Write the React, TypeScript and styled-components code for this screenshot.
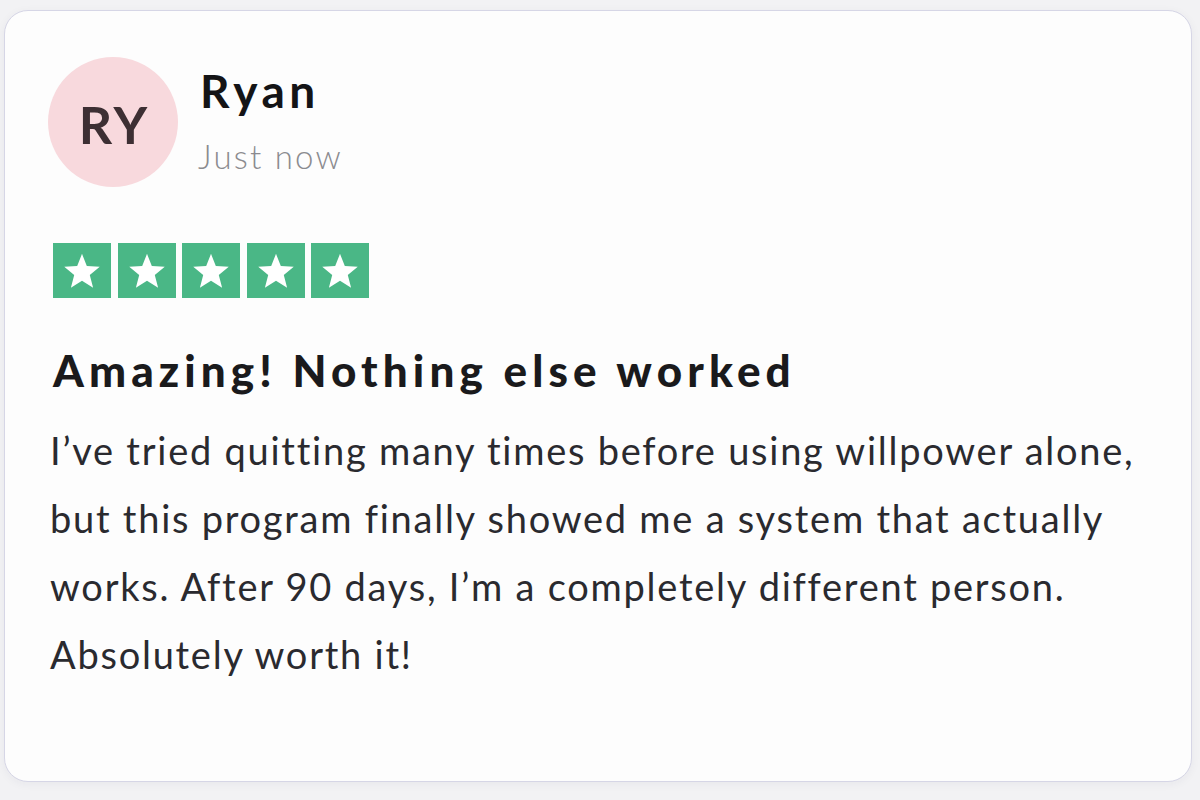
import React from "react";
import styled, { createGlobalStyle } from "styled-components";

const Global = createGlobalStyle`
  html, body { margin: 0; padding: 0; background: #f2f2f4; }
  body {
    font-family: Lato, "Open Sans", sans-serif;
    font-variant-ligatures: none;
    font-feature-settings: "liga" 0, "clig" 0;
  }
`;

const Page = styled.div`
  padding: 10px 8px 18px 4px;
`;

const Card = styled.div`
  box-sizing: border-box;
  width: 1188px;
  height: 772px;
  background: #fdfdfd;
  border: 1.5px solid #d6d6e6;
  border-radius: 24px;
  box-shadow: 0 2px 10px rgba(40, 40, 80, 0.05);
  padding: 46px 48px 0 48px;
  display: flex;
  flex-direction: column;
`;

const Header = styled.div`
  display: flex;
  align-items: flex-start;
  gap: 22px;
  margin-left: -5px;
`;

const Avatar = styled.div`
  width: 130px;
  height: 130px;
  border-radius: 50%;
  background: #f8d9dd;
  color: #3d2f33;
  font-weight: 700;
  font-size: 52px;
  letter-spacing: 3px;
  padding-top: 3px;
  padding-left: 3px;
  box-sizing: border-box;
  display: flex;
  align-items: center;
  justify-content: center;
  flex-shrink: 0;
`;

const Meta = styled.div`
  display: flex;
  flex-direction: column;
  padding-top: 7px;
`;

const Name = styled.div`
  font-size: 46px;
  font-weight: 700;
  color: #141416;
  line-height: 54px;
  letter-spacing: 4.5px;
`;

const Time = styled.div`
  font-size: 33px;
  font-weight: 300;
  color: #8b8b8f;
  line-height: 40px;
  margin-top: 18px;
  margin-left: -2px;
  letter-spacing: 2.2px;
`;

const Stars = styled.div`
  display: flex;
  gap: 6.5px;
  margin-top: 56px;
`;

const StarBox = styled.div`
  width: 58px;
  height: 55px;
  background: #4ab786;
  display: flex;
  align-items: center;
  justify-content: center;
`;

const Title = styled.h2`
  margin: 46px 0 0 0;
  font-size: 44px;
  font-weight: 900;
  color: #1a1a1c;
  line-height: 52px;
  letter-spacing: 5.1px;
`;

const Body = styled.p`
  margin: 20px -30px 0 -3px;
  font-size: 38px;
  font-weight: 400;
  color: #2a2a2f;
  line-height: 68px;
  letter-spacing: 1.75px;
`;

const Star = () => (
  <svg width="42" height="42" viewBox="0 0 24 24">
    <path
      d="M12 2.2l2.75 6.9 7.4.45-5.7 4.75 1.9 7.2L12 17.55l-6.35 3.95 1.9-7.2-5.7-4.75 7.4-.45z"
      fill="#ffffff"
    />
  </svg>
);

export default function App() {
  return (
    <>
      <Global />
      <Page>
        <Card>
          <Header>
            <Avatar>RY</Avatar>
            <Meta>
              <Name>Ryan</Name>
              <Time>Just now</Time>
            </Meta>
          </Header>
          <Stars>
            {[0, 1, 2, 3, 4].map((i) => (
              <StarBox key={i}>
                <Star />
              </StarBox>
            ))}
          </Stars>
          <Title>Amazing! Nothing else worked</Title>
          <Body>
            I’ve tried quitting many times before using willpower alone, but this program finally showed me a system that actually works. After 90 days, I’m a completely different person. Absolutely worth it!
          </Body>
        </Card>
      </Page>
    </>
  );
}
